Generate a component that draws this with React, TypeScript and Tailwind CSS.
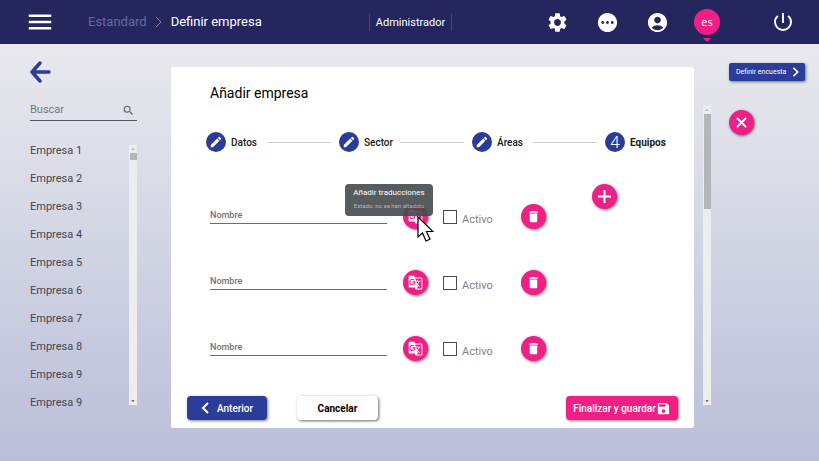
import type { ReactNode } from "react";
import {
  MdAccountCircle,
  MdArrowDropDown,
  MdArrowDropUp,
  MdDelete,
  MdEdit,
  MdGTranslate,
  MdMenu,
  MdPending,
  MdPowerSettingsNew,
  MdSave,
  MdSearch,
  MdSettings,
} from "react-icons/md";

const companies = [1, 2, 3, 4, 5, 6, 7, 8, 9, 9];
const steps = ["Datos", "Sector", "Áreas", "Equipos"];
const teams = [1, 2, 3];

function Chevron({ className, left = false }: { className: string; left?: boolean }) {
  return (
    <svg viewBox="0 0 8 12" className={className} fill="none" stroke="currentColor">
      <path d={left ? "M7 1L2 6l5 5" : "M1 1l5 5-5 5"} />
    </svg>
  );
}

function RoundButton({ label, children }: { label: string; children: ReactNode }) {
  return (
    <button
      aria-label={label}
      className="flex size-[25px] shrink-0 items-center justify-center rounded-full bg-[#f01f86] text-white shadow-[1px_1px_3px_rgba(0,0,0,0.55)]"
    >
      {children}
    </button>
  );
}

function ScrollBar({ className, thumb }: { className: string; thumb: string }) {
  return (
    <div className={`flex w-2 shrink-0 flex-col items-center bg-[#ededee] text-gray-700 ${className}`}>
      <MdArrowDropUp size={8} className="shrink-0 text-gray-400" />
      <div className={`w-[7px] bg-[#b4b7b8] ${thumb}`} />
      <MdArrowDropDown size={8} className="mt-auto shrink-0" />
    </div>
  );
}

function Header() {
  return (
    <header className="flex h-[44px] items-center bg-[#25265e] pr-6 pl-[25px] text-white">
      <button aria-label="Menú">
        <MdMenu size={30} />
      </button>
      <nav className="ml-[33px] flex items-center text-[13px]">
        <a href="#estandard" className="text-[#6566a0]">
          Estandard
        </a>
        <Chevron className="mx-2 h-3 w-2 text-[#8182b5]" />
        <a href="#empresa">Definir empresa</a>
      </nav>
      <div className="flex flex-1 items-center justify-between">
        <span className="ml-[107px] border-x border-[#45468a] px-1.5 pt-px text-[11px] leading-4">
          Administrador
        </span>
        <div className="flex items-center">
          <button aria-label="Ajustes" className="mr-[27px]">
            <MdSettings size={23} />
          </button>
          <button aria-label="Mensajes" className="mr-[27px]">
            <MdPending size={23} />
          </button>
          <button aria-label="Cuenta" className="mr-[25px]">
            <MdAccountCircle size={23} />
          </button>
          <button className="relative mr-[51px] size-[26px] rounded-full bg-[#f01f86] font-['Open_Sans',sans-serif] text-[11px] leading-6">
            es
            <svg viewBox="0 0 8 4" className="absolute top-[29px] left-[9px] h-1 w-2 fill-[#f01f86]">
              <path d="M0 0h8L4 4z" />
            </svg>
          </button>
          <button aria-label="Salir">
            <MdPowerSettingsNew size={24} />
          </button>
        </div>
      </div>
    </header>
  );
}

function Sidebar() {
  return (
    <aside className="w-[107px] shrink-0">
      <button aria-label="Volver" className="block text-[#2c3c98]">
        <svg
          viewBox="0 0 22 22"
          className="size-[22px]"
          fill="none"
          stroke="currentColor"
          strokeWidth="3.4"
          strokeLinecap="round"
          strokeLinejoin="round"
        >
          <path d="M19 11H2M10 2l-8 9 8 9" />
        </svg>
      </button>
      <label className="mt-[18px] flex h-5 items-center border-b border-[#55576b] text-[#606269]">
        <input
          aria-label="Buscar"
          placeholder="Buscar"
          className="w-full min-w-0 text-[11px] outline-none placeholder:text-[#75777f]"
        />
        <MdSearch size={13} className="mr-0.5 shrink-0" />
      </label>
      <div className="mt-4 flex items-start justify-between">
        <ul className="text-[11px] leading-7 text-[#44454f]">
          {companies.map((n, i) => (
            <li key={i}>
              <a href="#empresa">Empresa {n}</a>
            </li>
          ))}
        </ul>
        <ScrollBar className="mt-2 h-[260px]" thumb="h-[7px]" />
      </div>
    </aside>
  );
}

function Stepper() {
  return (
    <ol className="flex items-center text-[#1a1a1a]">
      {steps.map((step, i) => {
        const last = i === steps.length - 1;
        return (
          <li key={step} className={`flex items-center ${last ? "" : "flex-1"}`}>
            <button className="flex w-[61px] items-center gap-[5px]">
              <span className="flex size-5 shrink-0 items-center justify-center rounded-full bg-[#2b3b98] text-[17px] leading-5 font-light text-white">
                {last ? i + 1 : <MdEdit size={14} />}
              </span>
              <span className={`pt-px text-[10px] ${last ? "font-bold" : "font-medium"}`}>{step}</span>
            </button>
            {!last && <span className="mr-2 h-px flex-1 bg-[#cfcfcf]" />}
          </li>
        );
      })}
    </ol>
  );
}

function TeamRow({ id, tooltip }: { id: number; tooltip: boolean }) {
  return (
    <div className="flex h-[25px] items-center">
      <input
        aria-label={`Nombre ${id}`}
        placeholder="Nombre"
        className="mr-4 h-[14px] min-w-0 flex-1 border-b border-[#6a6b6d] pb-0.5 text-[9px] outline-none placeholder:font-medium placeholder:text-[#707173]"
      />
      <div className="relative">
        <RoundButton label="Añadir traducciones">
          <MdGTranslate size={15} />
        </RoundButton>
        {tooltip && (
          <>
            <div
              role="tooltip"
              className="absolute -top-5 -right-[5px] h-8 w-[88px] rounded bg-[#454a4c]/90 pt-1 text-center whitespace-nowrap text-white"
            >
              <p className="text-[8px] leading-[10px]">Añadir traducciones</p>
              <p className="mt-1 text-[6px] leading-2 text-[#b9babb]">Estado: no se han añadido</p>
            </div>
            <svg viewBox="0 0 17 26" className="absolute top-[12px] left-[14px] h-[26px] w-[17px]">
              <path d="M1 1v20l4.5-4 3.5 8 4-1.7-3.5-7.8H16z" fill="white" stroke="black" strokeWidth="1.2" />
            </svg>
          </>
        )}
      </div>
      <label className="ml-[15px] flex w-[78px] items-center gap-[5px] text-[11px] text-[#808183]">
        <input
          type="checkbox"
          className="size-[14px] appearance-none border border-[#4a4b4d] checked:bg-[#2b3b98]"
        />
        <span className="pt-1.5 leading-4">Activo</span>
      </label>
      <RoundButton label="Eliminar">
        <MdDelete size={15} />
      </RoundButton>
    </div>
  );
}

export default function App() {
  return (
    <div className="flex min-h-screen flex-col bg-linear-to-b from-[#eeeeef] to-[#babed9] font-[Roboto,sans-serif]">
      <Header />
      <div className="flex flex-1 items-start pt-[17px] pr-[14px] pb-8 pl-[30px]">
        <Sidebar />
        <main className="mt-1.5 ml-[34px] flex-1 rounded-xs bg-white pt-4 pb-2">
          <h1 className="ml-[39px] text-[14px] leading-5">Añadir empresa</h1>
          <div className="mt-[29px] mr-7 ml-[35px]">
            <Stepper />
          </div>
          <div className="mt-8 mr-[77px] ml-[39px] flex items-start">
            <div className="mr-[46px] flex flex-1 flex-col gap-[41px] pt-5">
              {teams.map((id) => (
                <TeamRow key={id} id={id} tooltip={id === 1} />
              ))}
            </div>
            <RoundButton label="Añadir equipo">
              <svg viewBox="0 0 13 13" className="size-[13px]" stroke="currentColor" strokeWidth="2">
                <path d="M6.5 0v13M0 6.500h13" />
              </svg>
            </RoundButton>
          </div>
          <div className="mx-4 mt-[35px] flex h-6 text-[10px] font-medium">
            <button className="flex w-20 items-center justify-center gap-2 rounded-sm bg-[#2b3d99] text-white shadow-[1px_1px_3px_rgba(0,0,0,0.5)]">
              <Chevron left className="h-3 w-2 stroke-2" />
              Anterior
            </button>
            <button className="ml-[30px] w-[81px] rounded-sm bg-white font-bold shadow-[1px_1px_3px_rgba(0,0,0,0.6)]">
              Cancelar
            </button>
            <button className="ml-auto flex w-[112px] items-center justify-center rounded-sm bg-[#f01f86] whitespace-nowrap text-white shadow-[1px_1px_3px_rgba(0,0,0,0.5)]">
              Finalizar y guardar
              <MdSave size={15} />
            </button>
          </div>
        </main>
        <ScrollBar className="mt-[45px] ml-[9px] h-[299px]" thumb="h-[95px]" />
        <div className="mt-0.5 ml-[18px] w-[76px] shrink-0">
          <button className="flex h-[18px] w-full items-center justify-between rounded-xs bg-[#2b3d99] pr-[5px] pl-[7px] text-[7px] text-white shadow-[1px_1px_3px_rgba(0,0,0,0.5)]">
            Definir encuesta
            <Chevron className="h-[10px] w-2 stroke-2" />
          </button>
          <div className="mt-[29px]">
            <RoundButton label="Cerrar">
              <svg viewBox="0 0 11 11" className="size-[11px]" stroke="currentColor" strokeWidth="1.8">
                <path d="M1 1l9 9M10 1l-9 9" />
              </svg>
            </RoundButton>
          </div>
        </div>
      </div>
    </div>
  );
}
